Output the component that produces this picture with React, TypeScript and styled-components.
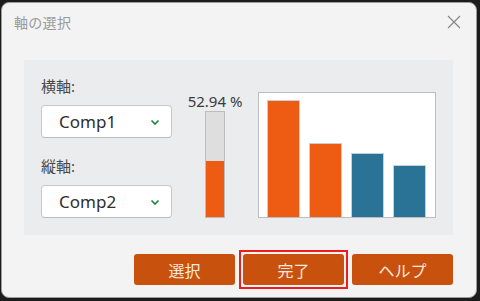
import React from "react";
import styled, { createGlobalStyle } from "styled-components";

const GlobalStyle = createGlobalStyle`
  html, body {
    margin: 0;
    padding: 0;
    background: #1c1c1c;
  }
  body {
    font-family: "Noto Sans", "Noto Sans CJK JP", sans-serif;
  }
`;

const Screen = styled.div`
  width: 480px;
  height: 301px;
  padding: 2px 3px 3px 1px;
  box-sizing: border-box;
`;

const Window = styled.div`
  height: 100%;
  display: flex;
  flex-direction: column;
  background: #f3f3f3;
  border: 1px solid #9c9c9c;
  border-radius: 8px;
  box-sizing: border-box;
`;

const TitleBar = styled.div`
  height: 37px;
  flex-shrink: 0;
  display: flex;
  align-items: center;
  justify-content: space-between;
  padding: 0 12px 0 12px;
`;

const Title = styled.span`
  font-size: 14px;
  color: #9a9a9a;
  letter-spacing: 0.3px;
`;

const CloseButton = styled.button`
  width: 20px;
  height: 20px;
  border: 0;
  padding: 0;
  background: transparent;
  display: flex;
  align-items: center;
  justify-content: center;
`;

const Body = styled.div`
  flex: 1;
  display: flex;
  flex-direction: column;
  padding: 20px 23px 8px 22px;
`;

const Panel = styled.div`
  height: 175px;
  flex-shrink: 0;
  display: flex;
  align-items: flex-end;
  padding: 0 16px 17px 17px;
  background: #ebecee;
  box-sizing: border-box;
`;

const Fields = styled.div`
  width: 131px;
  display: flex;
  flex-direction: column;
  gap: 18px;
`;

const Field = styled.div`
  display: flex;
  flex-direction: column;
  gap: 9px;
`;

const Label = styled.label`
  font-size: 15px;
  line-height: 20px;
  color: #484848;
`;

const Select = styled.div`
  height: 33px;
  display: flex;
  align-items: center;
  justify-content: space-between;
  padding: 0 11px 0 17px;
  background: #fff;
  border: 1px solid #c9c9c9;
  border-bottom-color: #bcbcbc;
  border-radius: 4px;
  box-sizing: border-box;
  font-size: 17px;
  color: #2e2e2e;
`;

const GaugeColumn = styled.div`
  width: 56px;
  margin-left: 15px;
  display: flex;
  flex-direction: column;
  align-items: center;
  gap: 1px;
`;

const Percent = styled.span`
  font-size: 15px;
  line-height: 18px;
  color: #3a3a3a;
  white-space: nowrap;
`;

const Gauge = styled.div`
  width: 20px;
  height: 107px;
  display: flex;
  flex-direction: column;
  justify-content: flex-end;
  background: #dedede;
  border: 1px solid #bdbdbd;
  box-sizing: border-box;
`;

const GaugeFill = styled.div`
  background: #ee5b12;
`;

const Chart = styled.div`
  width: 178px;
  height: 126px;
  margin-left: 15px;
  display: flex;
  align-items: flex-end;
  gap: 9px;
  padding: 0 8px;
  background: #fff;
  border: 1px solid #bdbdbd;
  box-sizing: border-box;
`;

const Bar = styled.div<{ $tone: "orange" | "blue" }>`
  width: 33px;
  background: ${p => (p.$tone === "orange" ? "#ee5b12" : "#2a7397")};
  border: 1px solid #c5d0d8;
  border-bottom: 0;
  box-sizing: border-box;
`;

const Actions = styled.div`
  flex-shrink: 0;
  display: flex;
  justify-content: flex-end;
  align-items: center;
  gap: 4px;
  margin-top: 15px;
`;

const FocusFrame = styled.div`
  display: flex;
  padding: 2px;
  border: 2px solid #ee1c1c;
`;

const ActionButton = styled.button`
  width: 101px;
  height: 31px;
  padding: 0;
  border: 0;
  border-radius: 3px;
  background: #c9510e;
  color: #fbe9de;
  font-family: "Noto Sans CJK JP", sans-serif;
  font-size: 16px;
  outline: none;
`;

const Chevron = () => (
  <svg width="10" height="8" viewBox="0 0 10 8">
    <path d="M1.5 2.5 L5 6 L8.5 2.5" fill="none" stroke="#1c8a3c" strokeWidth="1.7" />
  </svg>
);

const bars: { h: number; tone: "orange" | "blue" }[] = [
  { h: 117, tone: "orange" },
  { h: 74, tone: "orange" },
  { h: 64, tone: "blue" },
  { h: 52, tone: "blue" },
];

const ratio = 52.94;

export default function App() {
  return (
    <>
      <GlobalStyle />
      <Screen>
        <Window>
          <TitleBar>
            <Title>軸の選択</Title>
            <CloseButton aria-label="close">
              <svg width="14" height="14" viewBox="0 0 14 14">
                <path d="M1 1 L13 13 M13 1 L1 13" stroke="#858585" strokeWidth="1.1" />
              </svg>
            </CloseButton>
          </TitleBar>
          <Body>
            <Panel>
              <Fields>
                <Field>
                  <Label>横軸:</Label>
                  <Select>
                    Comp1
                    <Chevron />
                  </Select>
                </Field>
                <Field>
                  <Label>縦軸:</Label>
                  <Select>
                    Comp2
                    <Chevron />
                  </Select>
                </Field>
              </Fields>
              <GaugeColumn>
                <Percent>{ratio.toFixed(2)} %</Percent>
                <Gauge>
                  <GaugeFill style={{ height: `${ratio}%` }} />
                </Gauge>
              </GaugeColumn>
              <Chart>
                {bars.map((b, i) => (
                  <Bar key={i} $tone={b.tone} style={{ height: b.h }} />
                ))}
              </Chart>
            </Panel>
            <Actions>
              <ActionButton>選択</ActionButton>
              <FocusFrame>
                <ActionButton>完了</ActionButton>
              </FocusFrame>
              <ActionButton>ヘルプ</ActionButton>
            </Actions>
          </Body>
        </Window>
      </Screen>
    </>
  );
}
